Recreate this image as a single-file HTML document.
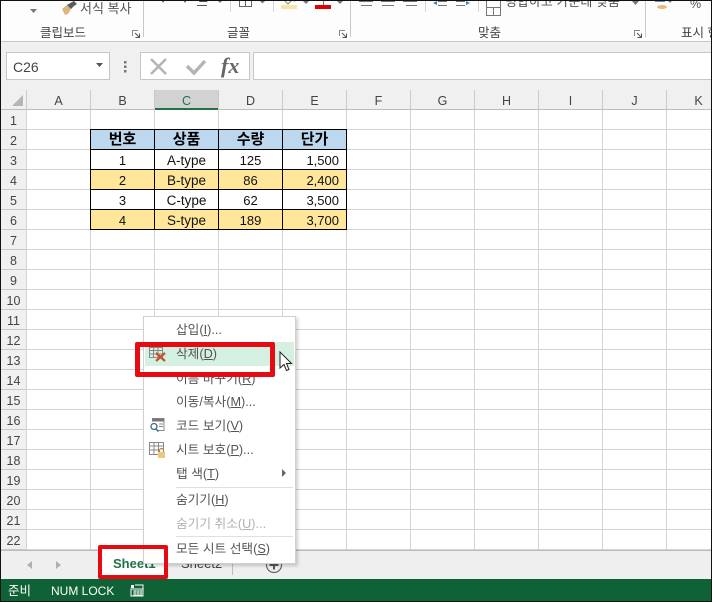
<!DOCTYPE html>
<html lang="ko"><head><meta charset="utf-8"><title>Excel</title>
<style>
html,body{margin:0;padding:0;background:#fff}
#p{position:relative;width:712px;height:602px;overflow:hidden;background:#fff;font-family:"Liberation Sans","Noto Sans CJK KR",sans-serif;color:#444;font-size:12px}
#p div{position:absolute}
.t{white-space:nowrap;line-height:16px}
.ch{top:90px;height:20px;width:63px;line-height:22px;text-align:center;font-size:12.5px;color:#444}
.rh{left:1px;width:25px;height:20px;line-height:22px;text-align:center;font-size:12.5px;color:#444}
.c{height:20px;line-height:22px;text-align:center;font-size:13px;color:#111;width:63px}
.w{font-size:13.5px}
.hd{font-weight:700;font-size:15px;top:129px;color:#000;line-height:21px}
.r{text-align:right;padding-right:7px;width:56px}
.m{left:176px;font-size:12.7px;color:#555;line-height:16px;white-space:nowrap}
.lbl{top:25px;font-size:12.5px;color:#444;line-height:16px;white-space:nowrap}
.sep{width:1px;background:#d4d4d4}
</style></head><body><div id="p">

<!-- ribbon -->
<div style="left:0;top:0;width:712px;height:41px;background:#fdfdfd"></div>
<div style="left:0;top:41px;width:712px;height:1px;background:#c6c6c6"></div>
<div class="sep" style="left:143px;top:0;height:37px;background:#c8c8c8"></div>
<div class="sep" style="left:350px;top:0;height:37px;background:#c8c8c8"></div>
<div class="sep" style="left:645px;top:0;height:37px;background:#c8c8c8"></div>
<div class="sep" style="left:230px;top:0;height:12px"></div>
<div class="sep" style="left:273px;top:0;height:12px"></div>
<div class="sep" style="left:425px;top:0;height:12px"></div>
<div class="sep" style="left:478px;top:0;height:12px"></div>

<svg style="position:absolute;left:60px;top:0" width="20" height="16" viewBox="0 0 20 16"><path d="M2 9l5-4 4 4-3 5-3 1z" fill="#dcb67c"/><path d="M7 5l5-3 2-1 3 3-3 2-3 3z" fill="#5a5a5a"/></svg>
<div class="t" style="left:80px;top:1px;font-size:13px;color:#555">서식 복사</div>
<svg style="position:absolute;left:29px;top:8px" width="10" height="6"><path d="M1 1h7L4.500 5z" fill="#777"/></svg>
<div class="t" style="left:154px;top:-11px;font-size:13px;color:#555;font-weight:700">가</div>
<div class="t" style="left:176px;top:-11px;font-size:13px;color:#555;font-weight:700">가</div>
<div class="t" style="left:197px;top:-11px;font-size:13px;color:#555;font-weight:700">간</div>
<div style="left:197px;top:5px;width:10px;height:1px;background:#555"></div>
<svg style="position:absolute;left:217px;top:0" width="8" height="4"><path d="M0 0h6L3 3z" fill="#777"/></svg>
<svg style="position:absolute;left:239px;top:0" width="26" height="8"><path d="M.5 0v6.500h12V0M6.500 0v6.500" stroke="#666" fill="none"/><path d="M21 1h5l-2.500 2.500z" fill="#777"/></svg>
<div style="left:281px;top:5px;width:16px;height:4px;background:#f9e3a5"></div>
<svg style="position:absolute;left:281px;top:0" width="16" height="5"><path d="M3 0l4 4 4-4" stroke="#888" fill="none"/><path d="M12 0h3l-1 2z" fill="#5a86b5"/></svg>
<svg style="position:absolute;left:303px;top:0" width="8" height="4"><path d="M0 1h6L3 4z" fill="#777"/></svg>
<div style="left:315px;top:5px;width:16px;height:4px;background:#e00000"></div>
<div style="left:323px;top:0;width:1px;height:5px;background:#777"></div>
<svg style="position:absolute;left:337px;top:0" width="8" height="4"><path d="M0 1h6L3 4z" fill="#777"/></svg>
<svg style="position:absolute;left:358px;top:0" width="64" height="7"><path d="M1 1.500h14M3 5.500h11M23 1.500h14M24 5.500h12M45 1.500h14M48 5.500h11" stroke="#777" fill="none"/></svg>
<svg style="position:absolute;left:432px;top:0" width="40" height="7"><path d="M6 1.500h9M6 5.500h9M24 1.500h9M24 5.500h9" stroke="#777" fill="none"/><path d="M1 3l4-2v4z" fill="#4a7fb5"/><path d="M38 3l-4-2v4z" fill="#4a7fb5"/></svg>
<svg style="position:absolute;left:486px;top:0" width="15" height="16"><path d="M.5 0v15.500h14V0M.5 7.500h14M7.500 7.500v8" stroke="#777" fill="none"/></svg>
<div class="t" style="left:505px;top:-6px;font-size:13px;color:#555">병합하고 가운데 맞춤</div>
<svg style="position:absolute;left:632px;top:1px" width="8" height="5"><path d="M0 0h7L3.500 4z" fill="#777"/></svg>
<svg style="position:absolute;left:652px;top:0" width="20" height="10"><ellipse cx="10" cy="7" rx="5" ry="2" fill="#e5bd7a"/><path d="M3 1h10" stroke="#6a8fb5" stroke-width="2"/><path d="M16 1h4L18 3z" fill="#888"/></svg>
<div class="t" style="left:690px;top:-4px;font-size:12.5px;color:#555">%</div>

<div class="lbl" style="left:40px">클립보드</div>
<div class="lbl" style="left:227px">글꼴</div>
<div class="lbl" style="left:478px">맞춤</div>
<div class="lbl" style="left:681px">표시 형</div>
<svg style="position:absolute;left:132px;top:30px" width="9" height="9"><path d="M.5 6V.5H6" stroke="#888" fill="none"/><path d="M3 3l4 4M3.500 7.500h4V3.500" stroke="#555" fill="none"/></svg>
<svg style="position:absolute;left:339px;top:30px" width="9" height="9"><path d="M.5 6V.5H6" stroke="#888" fill="none"/><path d="M3 3l4 4M3.500 7.500h4V3.500" stroke="#555" fill="none"/></svg>
<svg style="position:absolute;left:634px;top:30px" width="9" height="9"><path d="M.5 6V.5H6" stroke="#888" fill="none"/><path d="M3 3l4 4M3.500 7.500h4V3.500" stroke="#555" fill="none"/></svg>

<!-- formula bar -->
<div style="left:0;top:42px;width:712px;height:48px;background:#f0f0f0"></div>
<div style="left:6px;top:52px;width:102px;height:26px;background:#fff;border:1px solid #c6c6c6"></div>
<div class="t" style="left:13px;top:59px;font-size:14px;line-height:16px;color:#444">C26</div>
<svg style="position:absolute;left:95px;top:62px" width="9" height="6"><path d="M1 1h7L4.500 5z" fill="#555"/></svg>
<svg style="position:absolute;left:124px;top:61px" width="4" height="12"><path d="M0 0h2.500v2.500H0zM0 4.500h2.500V7H0zM0 9h2.500v2.500H0z" fill="#777"/></svg>
<div style="left:140px;top:52px;width:108px;height:26px;background:#fff;border:1px solid #c6c6c6"></div>
<svg style="position:absolute;left:149px;top:57px" width="20" height="20"><path d="M2 2l15 15M17 2L2 17" stroke="#b4b4b4" stroke-width="2.600" fill="none"/></svg>
<svg style="position:absolute;left:185px;top:57px" width="24" height="20"><path d="M2 9l7 7L20 4" stroke="#b4b4b4" stroke-width="3.400" fill="none"/></svg>
<div class="t" style="left:221px;top:55px;font:italic 700 22px/22px 'Liberation Serif',serif;color:#666">fx</div>
<div style="left:253px;top:52px;width:459px;height:26px;background:#fff;border:1px solid #c6c6c6;border-right:0"></div>

<!-- column header -->
<div style="left:0;top:90px;width:712px;height:20px;background:#f0f0f0"></div>
<div style="left:0;top:109px;width:712px;height:1px;background:#bdbdbd"></div>
<div style="left:155px;top:90px;width:63px;height:20px;background:#d2d2d2"></div>
<div style="left:155px;top:108px;width:64px;height:2px;background:#217346"></div>
<svg style="position:absolute;left:11px;top:94px" width="13" height="13"><path d="M12 1v11H1z" fill="#b5b5b5"/></svg>
<div style="left:26px;top:90px;width:686px;height:20px;background:repeating-linear-gradient(90deg,#c9c9c9 0,#c9c9c9 1px,transparent 1px,transparent 64px)"></div>
<div class="ch" style="left:27px">A</div><div class="ch" style="left:91px">B</div><div class="ch" style="left:155px;color:#217346">C</div><div class="ch" style="left:219px">D</div><div class="ch" style="left:283px">E</div><div class="ch" style="left:347px">F</div><div class="ch" style="left:411px">G</div><div class="ch" style="left:475px">H</div><div class="ch" style="left:539px">I</div><div class="ch" style="left:603px">J</div><div class="ch" style="left:667px">K</div>

<!-- row header -->
<div style="left:0;top:110px;width:26px;height:440px;background:#f0f0f0"></div>
<div style="left:1px;top:110px;width:25px;height:440px;background:repeating-linear-gradient(180deg,transparent 0,transparent 19px,#c9c9c9 19px,#c9c9c9 20px)"></div>
<div class="rh" style="top:110px">1</div><div class="rh" style="top:130px">2</div><div class="rh" style="top:150px">3</div><div class="rh" style="top:170px">4</div><div class="rh" style="top:190px">5</div><div class="rh" style="top:210px">6</div><div class="rh" style="top:230px">7</div><div class="rh" style="top:250px">8</div><div class="rh" style="top:270px">9</div><div class="rh" style="top:290px">10</div><div class="rh" style="top:310px">11</div><div class="rh" style="top:330px">12</div><div class="rh" style="top:350px">13</div><div class="rh" style="top:370px">14</div><div class="rh" style="top:390px">15</div><div class="rh" style="top:410px">16</div><div class="rh" style="top:430px">17</div><div class="rh" style="top:450px">18</div><div class="rh" style="top:470px">19</div><div class="rh" style="top:490px">20</div><div class="rh" style="top:510px">21</div><div class="rh" style="top:530px">22</div>

<!-- grid -->
<div style="left:26px;top:110px;width:686px;height:440px;background:repeating-linear-gradient(90deg,#d4d4d4 0,#d4d4d4 1px,transparent 1px,transparent 64px),repeating-linear-gradient(180deg,transparent 0,transparent 19px,#d4d4d4 19px,#d4d4d4 20px)"></div>

<!-- table -->
<div style="left:90px;top:129px;width:257px;height:20px;background:#bdd7ee"></div>
<div style="left:90px;top:169px;width:257px;height:20px;background:#ffe699"></div>
<div style="left:90px;top:209px;width:257px;height:20px;background:#ffe699"></div>
<div style="left:90px;top:129px;width:257px;height:101px;background:repeating-linear-gradient(180deg,#000 0,#000 1px,transparent 1px,transparent 20px)"></div>
<div style="left:90px;top:129px;width:257px;height:101px;background:repeating-linear-gradient(90deg,#000 0,#000 1px,transparent 1px,transparent 64px)"></div>

<div class="c hd" style="left:91px">번호</div><div class="c hd" style="left:155px">상품</div><div class="c hd" style="left:219px">수량</div><div class="c hd" style="left:283px">단가</div>
<div class="c" style="left:91px;top:150px">1</div><div class="c w" style="left:155px;top:150px">A-type</div><div class="c" style="left:219px;top:150px">125</div><div class="c r" style="left:283px;top:150px">1,500</div>
<div class="c" style="left:91px;top:170px">2</div><div class="c w" style="left:155px;top:170px">B-type</div><div class="c" style="left:219px;top:170px">86</div><div class="c r" style="left:283px;top:170px">2,400</div>
<div class="c" style="left:91px;top:190px">3</div><div class="c w" style="left:155px;top:190px">C-type</div><div class="c" style="left:219px;top:190px">62</div><div class="c r" style="left:283px;top:190px">3,500</div>
<div class="c" style="left:91px;top:210px">4</div><div class="c w" style="left:155px;top:210px">S-type</div><div class="c" style="left:219px;top:210px">189</div><div class="c r" style="left:283px;top:210px">3,700</div>

<!-- sheet tabs -->
<div style="left:0;top:550px;width:712px;height:29px;background:#efefef;border-top:1px solid #bdbdbd;box-sizing:border-box"></div>
<svg style="position:absolute;left:26px;top:560px" width="8" height="10"><path d="M6 1v8L1 5z" fill="#b0b0b0"/></svg>
<svg style="position:absolute;left:55px;top:560px" width="8" height="10"><path d="M1 1v8l5-4z" fill="#b0b0b0"/></svg>
<div style="left:100px;top:549px;width:66px;height:30px;background:#fff"></div>
<div class="t" style="left:113px;top:556px;font-weight:700;font-size:13px;color:#217346">Sheet1</div>
<div class="t" style="left:181px;top:556px;font-size:13px;color:#444">Sheet2</div>
<div class="sep" style="left:232px;top:552px;height:23px;background:#bdbdbd"></div>
<svg style="position:absolute;left:265px;top:556px" width="18" height="18"><circle cx="9" cy="9" r="7.500" fill="none" stroke="#666" stroke-width="1.200"/><path d="M9 4.500v9M4.500 9h9" stroke="#555" stroke-width="2"/></svg>

<!-- status -->
<div style="left:0;top:579px;width:712px;height:22px;background:#0f6235"></div>
<div class="t" style="left:8px;top:583px;font-size:12.5px;color:#fff">준비</div>
<div class="t" style="left:51px;top:583px;font-size:12px;color:#fff">NUM LOCK</div>
<svg style="position:absolute;left:130px;top:584px" width="14" height="13"><path d="M1 1h3v3H1z" fill="#fff"/><path d="M5 1h8v11H1V5h12" fill="none" stroke="#fff"/><path d="M3 7h9M3 9h9M3 11h9M5 6v6M8 6v6M11 6v6" stroke="#fff" stroke-width=".8"/></svg>

<!-- frame -->
<div style="left:0;top:0;width:1px;height:602px;background:#111"></div>
<div style="left:711px;top:0;width:1px;height:602px;background:#111"></div>
<div style="left:0;top:0;width:712px;height:1px;background:#111"></div>
<div style="left:0;top:601px;width:712px;height:1px;background:#111"></div>

<!-- context menu -->
<div style="left:143px;top:316px;width:153px;height:248px;background:#fff;border:1px solid #d0d0d0;box-sizing:border-box;box-shadow:2px 2px 3px rgba(0,0,0,.18)"></div>
<div style="left:145px;top:342px;width:149px;height:24px;background:#d3f0e0"></div>
<div style="left:176px;top:487px;width:117px;height:1px;background:#e0e0e0"></div>
<div style="left:176px;top:536px;width:117px;height:1px;background:#e0e0e0"></div>
<div class="m" style="top:322px">삽입(<u>I</u>)...</div>
<div class="m" style="top:346px">삭제(<u>D</u>)</div>
<div class="m" style="top:371px">이름 바꾸기(<u>R</u>)</div>
<div class="m" style="top:394px">이동/복사(<u>M</u>)...</div>
<div class="m" style="top:418px">코드 보기(<u>V</u>)</div>
<div class="m" style="top:442px">시트 보호(<u>P</u>)...</div>
<div class="m" style="top:466px">탭 색(<u>T</u>)</div>
<div class="m" style="top:492px">숨기기(<u>H</u>)</div>
<div class="m" style="top:516px;color:#b1b1b1">숨기기 취소(<u>U</u>)...</div>
<div class="m" style="top:541px">모든 시트 선택(<u>S</u>)</div>
<svg style="position:absolute;left:281px;top:469px" width="6" height="9"><path d="M1 0v8l4-4z" fill="#666"/></svg>

<svg style="position:absolute;left:149px;top:347px" width="18" height="16"><path d="M.5 .5h13v10H.5zM.5 3.500h13M.5 7h13M4.500 .5v10M9 .5v10" fill="none" stroke="#8a8a8a"/><path d="M7 6l9 8M16 6l-9 8" stroke="#c8502f" stroke-width="2.200"/></svg>
<svg style="position:absolute;left:149px;top:418px" width="16" height="15"><path d="M3 .5h12v12H8" fill="none" stroke="#888"/><path d="M3 .5h12v3H3z" fill="#777"/><path d="M10 6h4M10 8.500h4" stroke="#888"/><circle cx="5" cy="8.500" r="3" fill="none" stroke="#3f6f8f" stroke-width="1.300"/><path d="M7 11l2.500 2.500" stroke="#3f6f8f" stroke-width="1.500"/></svg>
<svg style="position:absolute;left:149px;top:442px" width="18" height="17"><path d="M.5 .5h14v12H.5zM.5 4h14M.5 8h14M5 .5v12M9.500 .5v12" fill="none" stroke="#8a8a8a"/><rect x="9" y="10" width="7" height="6" fill="#eec77e"/><path d="M10.500 10V8.500a2 2 0 0 1 4 0V10" fill="#fff" stroke="#b08a45" stroke-width="1.200"/></svg>

<!-- mouse cursor -->
<svg style="position:absolute;left:279px;top:351px" width="14" height="22"><path d="M1 1v16l4-3.500 2.500 6 2.500-1-2.500-6h5z" fill="#fff" stroke="#222" stroke-width="1"/></svg>

<!-- red highlights -->
<div style="left:135px;top:342px;width:140px;height:35px;border:5px solid #e60b12;box-sizing:border-box;border-radius:2px"></div>
<div style="left:98px;top:545px;width:70px;height:34px;border:4px solid #e60b12;box-sizing:border-box;border-radius:2px"></div>
</div></body></html>
